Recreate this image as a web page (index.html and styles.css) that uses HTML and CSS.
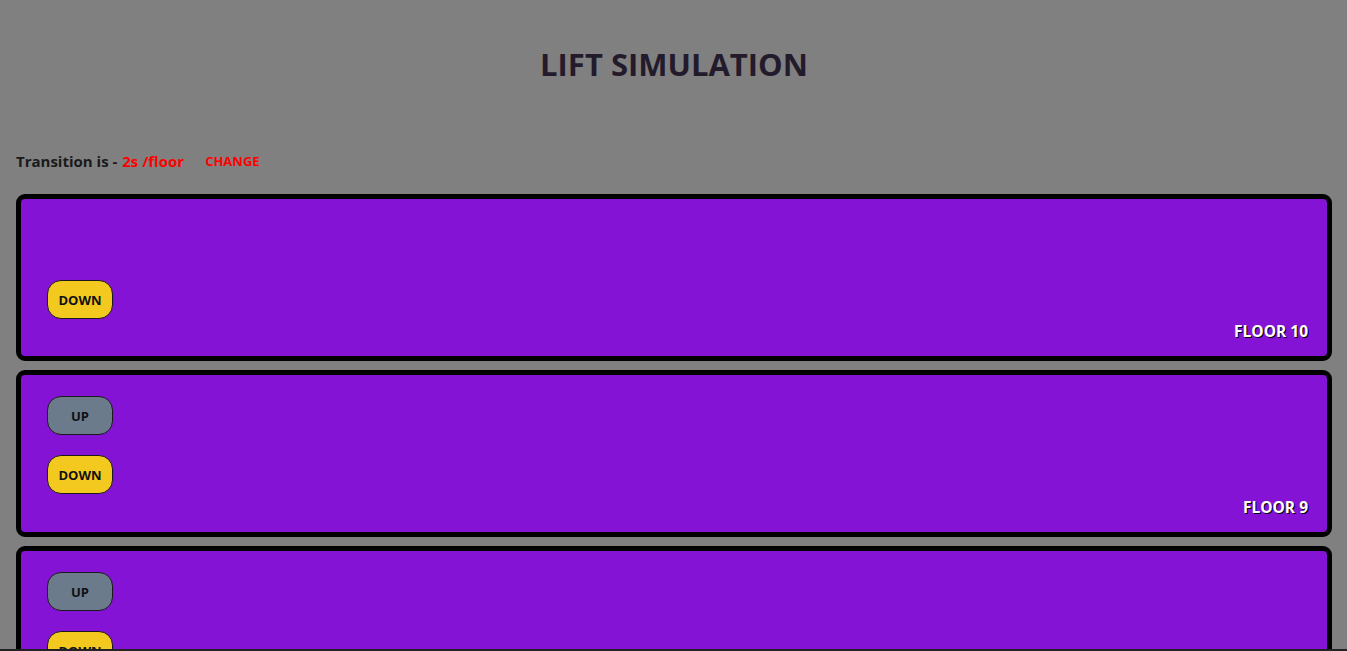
FILE: index.html
```html
<!DOCTYPE html>
<html lang="en">
<head>
<meta charset="utf-8">
<title>Lift Simulation</title>
<link rel="stylesheet" href="styles.css">
</head>
<body>
<h1 class="title">LIFT SIMULATION</h1>
<div class="transition">
  <span class="transition-label">Transition is - </span>
  <span class="transition-value">2s /floor</span>
  <button class="change-btn">CHANGE</button>
</div>
<div class="floors">
  <div class="floor">
    <div class="buttons">
      <button class="btn btn-up hidden">UP</button>
      <button class="btn btn-down">DOWN</button>
    </div>
    <div class="floor-label">FLOOR 10</div>
  </div>
  <div class="floor">
    <div class="buttons">
      <button class="btn btn-up">UP</button>
      <button class="btn btn-down">DOWN</button>
    </div>
    <div class="floor-label">FLOOR 9</div>
  </div>
  <div class="floor">
    <div class="buttons">
      <button class="btn btn-up">UP</button>
      <button class="btn btn-down">DOWN</button>
    </div>
    <div class="floor-label">FLOOR 8</div>
  </div>
</div>
<div class="bottom-bar"></div>
</body>
</html>
```
FILE: styles.css
```css
html, body {
  background: #808080;
}
body {
  margin: 0;
  padding: 0 15px 0 16px;
  font-family: "Open Sans", "Noto Sans", sans-serif;
  overflow: hidden;
  height: 651px;
}
.title {
  margin: 0;
  padding-top: 42px;
  font-size: 31px;
  line-height: 44px;
  font-weight: 700;
  text-align: center;
  color: #231b2c;
}
.transition {
  margin-top: 64px;
  display: flex;
  align-items: center;
  height: 20px;
  font-size: 15px;
  font-weight: 700;
  line-height: 20px;
  padding-top: 1px;
}
.transition-label {
  color: #1a1a1a;
  white-space: pre;
}
.transition-value {
  color: #ff0000;
  margin-left: 1px;
}
.change-btn {
  background: transparent;
  border: none;
  color: #ff0000;
  font-family: inherit;
  font-weight: 700;
  font-size: 13px;
  padding: 0;
  margin-left: 21px;
  margin-top: -1px;
  cursor: pointer;
}
.floors {
  margin-top: 23px;
  display: flex;
  flex-direction: column;
  gap: 9px;
}
.floor {
  box-sizing: border-box;
  height: 167px;
  flex-shrink: 0;
  background: #8413d6;
  border: 5px solid #000;
  border-radius: 9px;
  display: flex;
  justify-content: space-between;
  padding: 21px 19px 15px 26px;
}
.buttons {
  display: flex;
  flex-direction: column;
  gap: 20px;
}
.floor:first-child .buttons {
  padding-top: 1px;
}
.btn {
  width: 66px;
  height: 39px;
  border: 1px solid #1a1a1a;
  border-radius: 14px;
  font-family: inherit;
  font-size: 13px;
  font-weight: 700;
  color: #111;
  padding: 0;
}
.btn-up {
  background: #6c7b8b;
}
.btn-down {
  background: #f4c91f;
}
.hidden {
  visibility: hidden;
}
.floor-label {
  align-self: flex-end;
  color: #fff;
  font-size: 15.5px;
  font-weight: 700;
  line-height: 20px;
  text-shadow: 1px 1px 0 #000;
}
.bottom-bar {
  position: fixed;
  left: 0;
  right: 0;
  bottom: 0;
  height: 2px;
  background: #222;
}
```
